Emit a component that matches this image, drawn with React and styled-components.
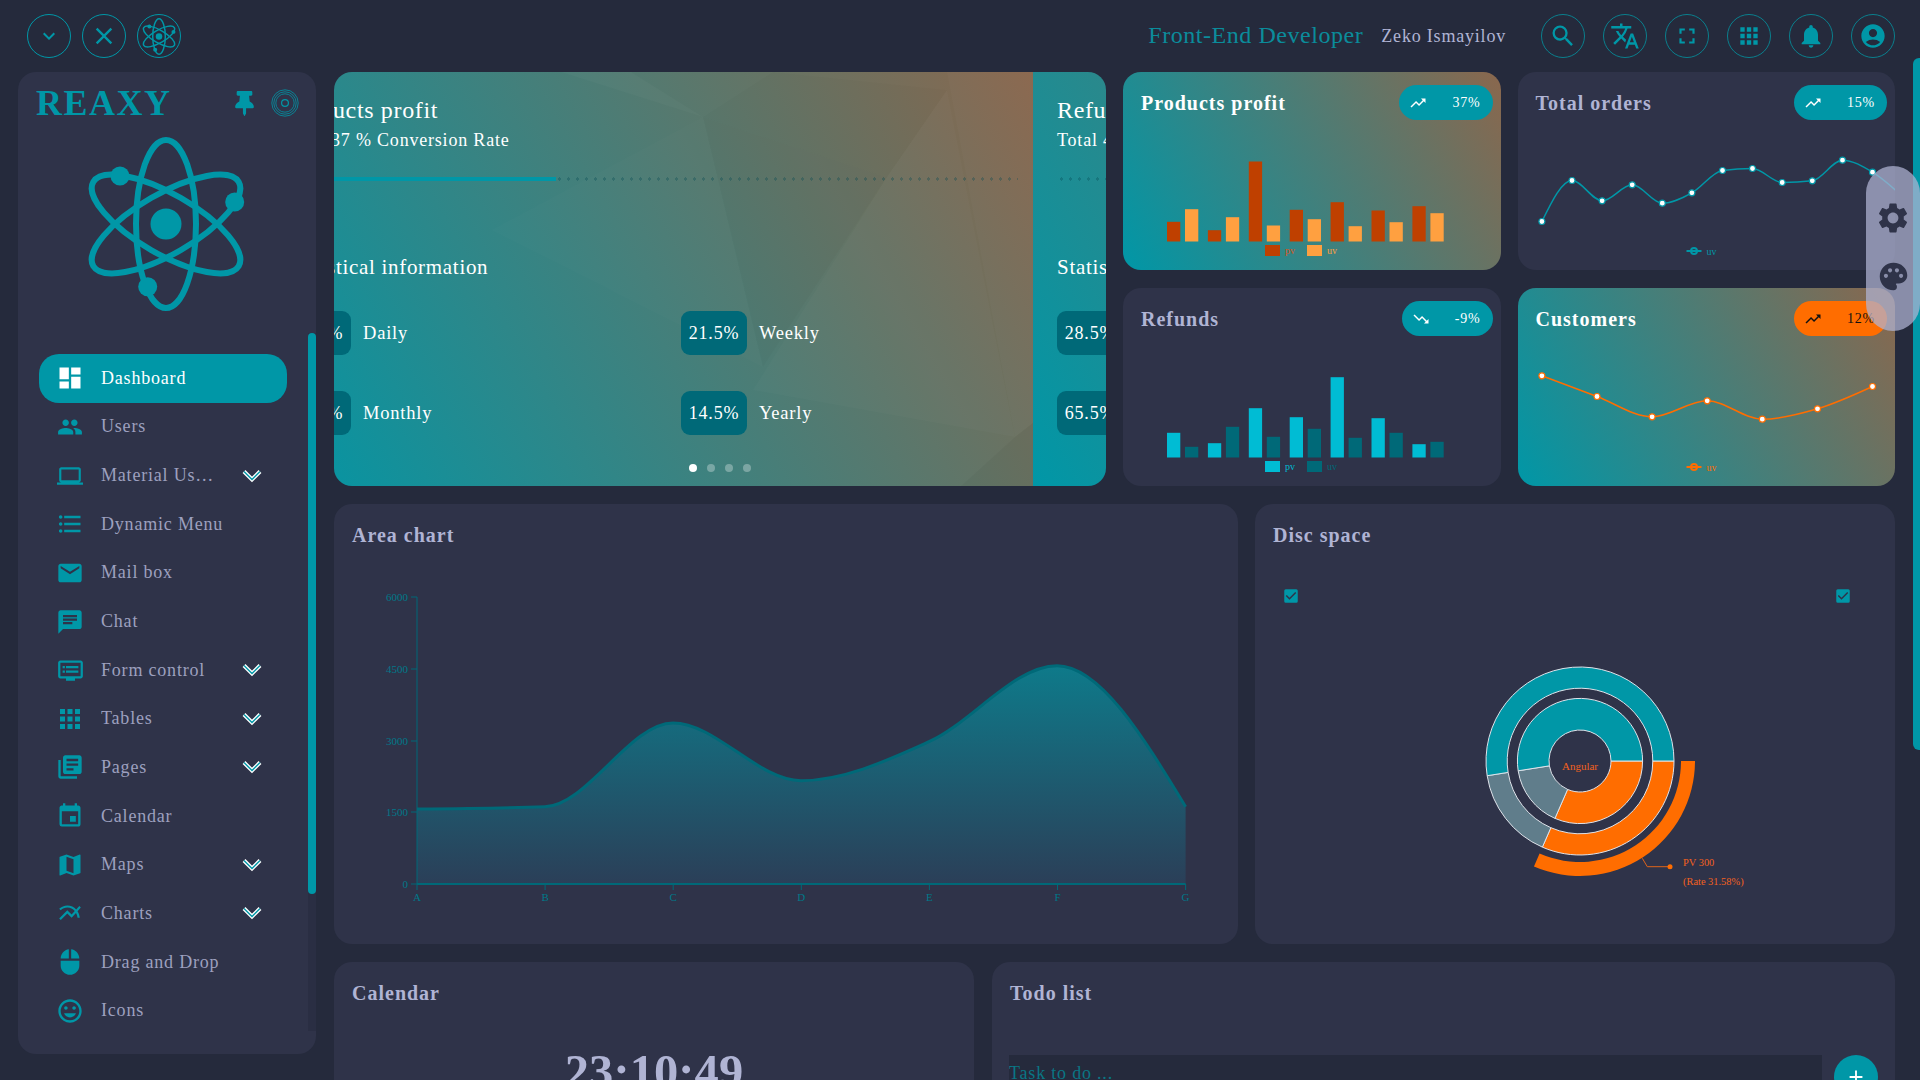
import React from 'react';
import styled, { createGlobalStyle } from 'styled-components';
import { FaThumbtack } from 'react-icons/fa';
import {
  MdKeyboardArrowDown, MdClose, MdSearch, MdTranslate, MdFullscreen, MdApps, MdNotifications,
  MdAccountCircle, MdDashboard, MdPeople, MdLaptop, MdFormatListBulleted, MdEmail, MdChat, MdDvr, MdLibraryBooks,
  MdEvent, MdMap, MdMultilineChart, MdMouse, MdInsertEmoticon, MdTrendingUp, MdTrendingDown,
  MdSettings, MdPalette, MdCheckBox, MdAdd,
} from 'react-icons/md';

const teal = '#0097a7';
const tealDark = '#006978';
const bg = '#252a3c';
const panel = '#2f3349';
const soft = '#b0b4d4';
const orange = '#ff6d00';
const cardGradient = 'linear-gradient(60deg, #0097a7, #8a674d)';

const GlobalStyle = createGlobalStyle`
  html, body {
    margin: 0;
    height: 100%;
    background: ${bg};
    overflow: hidden;
    font-family: "Liberation Serif", "Times New Roman", serif;
  }
  * { box-sizing: border-box; }
`;

const Page = styled.div`
  position: relative;
  height: 1080px;
  overflow: hidden;
  background: ${bg};
  letter-spacing: .8px;
`;

const Header = styled.header`
  display: flex;
  align-items: center;
  height: 72px;
  padding: 0 25px 0 27px;
`;

const HeaderGroup = styled.div`
  display: flex;
  align-items: center;
  gap: ${props => props.$gap}px;
`;

const RoundButton = styled.button`
  display: flex;
  align-items: center;
  justify-content: center;
  width: 44px;
  height: 44px;
  padding: 0;
  border: 1px solid ${props => props.$dim ? '#0a7f8d' : teal};
  border-radius: 50%;
  background: transparent;
  color: ${teal};
`;

const Role = styled.span`
  margin: 0 0 2px auto;
  font-size: 24px;
  letter-spacing: .55px;
  color: #0b8c9b;
`;

const UserName = styled.span`
  margin: 0 35px 0 18px;
  font-size: 18px;
  color: ${soft};
`;

const Body = styled.div`
  display: flex;
  gap: 18px;
  height: 1008px;
  padding: 0 25px 0 18px;
`;

const Sidebar = styled.aside`
  display: flex;
  flex-direction: column;
  flex: 0 0 298px;
  height: 982px;
  padding-bottom: 23px;
  border-radius: 18px;
  background: ${panel};
`;

const SideHead = styled.div`
  display: flex;
  align-items: center;
  height: 62px;
  padding: 0 17px 0 18px;
  color: ${teal};
`;

const Logo = styled.div`
  flex: 1;
  font-size: 36px;
  font-weight: bold;
  letter-spacing: 1.5px;
  color: ${teal};
`;

const PinIcon = styled(FaThumbtack)`
  margin-right: 14px;
`;

const BigAtom = styled.div`
  display: flex;
  justify-content: center;
  height: 176px;
  margin: 2px 2px 21px 0;
`;

const MenuArea = styled.div`
  display: flex;
  flex: 1;
  min-height: 0;
`;

const NavList = styled.nav`
  flex: 1;
  padding: 21px 21px 0;
  overflow: hidden;
`;

const NavItem = styled.div`
  display: flex;
  align-items: center;
  gap: 17px;
  height: 48.65px;
  padding: 0 25px 0 17px;
  border-radius: 20px;
  font-size: 18px;
  color: ${props => props.$active ? '#fff' : '#9da0bf'};
  background: ${props => props.$active ? teal : 'transparent'};
`;

const NavIcon = styled.span`
  display: flex;
  flex: 0 0 28px;
  min-width: 0;
  justify-content: center;
  color: ${props => props.$active ? '#fff' : teal};

  svg {
    flex: none;
  }
`;

const NavLabel = styled.span`
  max-width: ${props => props.$short ? '114px' : 'none'};
  white-space: nowrap;
  overflow: hidden;
  text-overflow: ellipsis;
`;

const NavChevron = styled.svg`
  flex: none;
  margin-left: auto;
`;

const ScrollTrack = styled.div`
  flex: 0 0 8px;
  background: #2a2e43;
`;

const ScrollThumb = styled.div`
  height: 561px;
  border-radius: 4px;
  background: ${teal};
`;

const Main = styled.main`
  display: flex;
  flex: 1;
  flex-direction: column;
  gap: 18px;
  min-width: 0;
`;

const TopRow = styled.div`
  display: grid;
  grid-template-columns: 772px 377.5px 377.5px;
  grid-template-rows: 198px 198px;
  gap: 18px 17px;
`;

const Hero = styled.section`
  position: relative;
  grid-row: 1 / 3;
  border-radius: 18px;
  overflow: hidden;
`;

const HeroTrack = styled.div`
  display: flex;
  width: 1544px;
  height: 100%;
  transform: translateX(-73px);
`;

const Slide = styled.div`
  position: relative;
  flex: 0 0 772px;
  padding: 24px 15px 0 24px;
  color: #fff;
  background: ${cardGradient};
`;

const SlideShapes = styled.svg`
  position: absolute;
  inset: 0;
`;

const SlideContent = styled.div`
  position: relative;
`;

const SlideTitle = styled.div`
  font-size: 24px;
  line-height: 28px;
  letter-spacing: .65px;
`;

const SlideSub = styled.div`
  margin-top: 4px;
  font-size: 18px;
  line-height: 24px;
  letter-spacing: .8px;
`;

const Progress = styled.div`
  height: 4px;
  margin-top: 25px;
  background-image: radial-gradient(circle, rgba(0, 70, 80, .3) 1.5px, transparent 1.6px);
  background-size: 9px 4px;
`;

const ProgressFill = styled.div`
  height: 100%;
  background: ${teal};
`;

const StatHeading = styled.div`
  margin-top: 74px;
  font-size: 21px;
  line-height: 24px;
  letter-spacing: .7px;
`;

const StatGrid = styled.div`
  display: grid;
  grid-template-columns: 396px 1fr;
  gap: 36px 0;
  margin-top: 32px;
`;

const Stat = styled.div`
  display: flex;
  align-items: center;
  gap: 12px;
  font-size: 18.5px;
`;

const StatBadge = styled.div`
  display: flex;
  align-items: center;
  justify-content: center;
  width: 66px;
  height: 44px;
  border-radius: 9px;
  font-size: 18px;
  background: ${tealDark};
`;

const Dots = styled.div`
  position: absolute;
  left: 0;
  right: 0;
  bottom: 14px;
  display: flex;
  justify-content: center;
  gap: 10px;
`;

const Dot = styled.span`
  width: 8px;
  height: 8px;
  border-radius: 50%;
  background: ${props => props.$on ? '#fff' : 'rgba(255, 255, 255, .3)'};
`;

const Card = styled.section`
  border-radius: 18px;
  overflow: hidden;
  background: ${props => props.$gradient ? cardGradient : panel};
`;

const CardHead = styled.div`
  display: flex;
  align-items: center;
  justify-content: space-between;
  height: 62px;
  padding: 13px 8px 14px 18px;
`;

const CardTitle = styled.h3`
  margin: 2px 0 0;
  font-size: 20px;
  font-weight: bold;
  letter-spacing: 1px;
  color: ${props => props.$light ? '#fff' : soft};
`;

const Pill = styled.div`
  display: flex;
  align-items: center;
  gap: 25px;
  height: 35px;
  padding: 0 12px 0 10px;
  border-radius: 18px;
  font-size: 14px;
  color: ${props => props.$alert ? '#111' : '#fff'};
  background: ${props => props.$alert ? orange : teal};
`;

const ChartSvg = styled.svg`
  display: block;
`;

const ChartText = styled.text`
  font-size: ${props => props.$size || 10}px;
  letter-spacing: 0;
`;

const MiddleRow = styled.div`
  display: grid;
  grid-template-columns: 904px 640px;
  grid-template-rows: 440px;
  gap: 17px;
`;

const CheckRow = styled.div`
  display: flex;
  justify-content: space-between;
  height: 18px;
  margin-top: 21px;
  padding: 0 43px 0 27px;
  color: ${teal};
`;

const BottomRow = styled.div`
  display: grid;
  grid-template-columns: 640px 903px;
  grid-template-rows: 300px;
  gap: 18px;
`;

const Clock = styled.div`
  margin-top: 24px;
  text-align: center;
  font-size: 48.5px;
  line-height: 48px;
  font-weight: bold;
  letter-spacing: .1px;
  color: ${soft};
`;

const TodoForm = styled.div`
  display: flex;
  gap: 12px;
  margin-top: 31px;
  padding: 0 17px;
`;

const TodoInput = styled.input`
  flex: 1;
  height: 44px;
  padding: 0 0 7px;
  border: 0;
  outline: 0;
  font-family: inherit;
  font-size: 18px;
  letter-spacing: .8px;
  color: ${soft};
  background: ${bg};

  &::placeholder {
    color: #0a7684;
    opacity: 1;
  }
`;

const AddButton = styled.button`
  display: flex;
  align-items: center;
  justify-content: center;
  width: 44px;
  height: 44px;
  padding: 0;
  border: 0;
  border-radius: 50%;
  color: #fff;
  background: ${teal};
`;

const PageScroll = styled.div`
  position: absolute;
  top: 58px;
  right: 0;
  width: 7px;
  height: 692px;
  border-radius: 6px 0 0 6px;
  background: ${teal};
`;

const FloatPanel = styled.div`
  position: absolute;
  top: 166px;
  right: 0;
  display: flex;
  flex-direction: column;
  align-items: center;
  gap: 24px;
  width: 54px;
  height: 165px;
  padding-top: 34px;
  border-radius: 27px;
  color: ${panel};
  background: rgba(176, 180, 212, .72);
`;

const menu = [
  { label: 'Dashboard', icon: MdDashboard, active: true },
  { label: 'Users', icon: MdPeople, size: 26 },
  { label: 'Material User Interface', icon: MdLaptop, sub: true, size: 26 },
  { label: 'Dynamic Menu', icon: MdFormatListBulleted },
  { label: 'Mail box', icon: MdEmail },
  { label: 'Chat', icon: MdChat },
  { label: 'Form control', icon: MdDvr, sub: true, size: 27 },
  { label: 'Tables', icon: MdApps, sub: true, size: 30 },
  { label: 'Pages', icon: MdLibraryBooks, sub: true },
  { label: 'Calendar', icon: MdEvent },
  { label: 'Maps', icon: MdMap, sub: true },
  { label: 'Charts', icon: MdMultilineChart, sub: true, size: 26 },
  { label: 'Drag and Drop', icon: MdMouse },
  { label: 'Icons', icon: MdInsertEmoticon },
];

// d3 style monotone-x curve, same look as the chart library lines
const monotonePath = (pts) => {
  const n = pts.length;
  const dx = [];
  const m = [];
  for (let i = 0; i < n - 1; i++) {
    dx[i] = pts[i + 1][0] - pts[i][0];
    m[i] = (pts[i + 1][1] - pts[i][1]) / dx[i];
  }
  const t = [m[0]];
  for (let i = 1; i < n - 1; i++) {
    if (m[i - 1] * m[i] <= 0) t[i] = 0;
    else {
      const p = (m[i - 1] * dx[i] + m[i] * dx[i - 1]) / (dx[i - 1] + dx[i]);
      t[i] = (Math.sign(m[i - 1]) + Math.sign(m[i])) * Math.min(Math.abs(m[i - 1]), Math.abs(m[i]), 0.5 * Math.abs(p));
    }
  }
  t[n - 1] = m[n - 2];
  t[0] = (3 * m[0] - t[1]) / 2;
  t[n - 1] = (3 * m[n - 2] - t[n - 2]) / 2;
  let d = `M${pts[0][0]} ${pts[0][1]}`;
  for (let i = 0; i < n - 1; i++) {
    const h = dx[i] / 3;
    d += `C${pts[i][0] + h} ${pts[i][1] + t[i] * h} ${pts[i + 1][0] - h} ${pts[i + 1][1] - t[i + 1] * h} ${pts[i + 1][0]} ${pts[i + 1][1]}`;
  }
  return d;
};

const Atom = ({ height, strokeWidth = 6 }) => (
  <svg height={height} viewBox="-81 -88 162 176" fill="none" stroke={teal} strokeWidth={strokeWidth}>
    <ellipse rx="30" ry="84" />
    <ellipse rx="30" ry="84" transform="rotate(60)" />
    <ellipse rx="30" ry="84" transform="rotate(-60)" />
    <g fill={teal} stroke="none">
      <circle r="15.5" />
      <circle cx="-46" cy="-48" r="9.5" />
      <circle cx="68.7" cy="-22" r="9.5" />
      <circle cx="-18.3" cy="62.7" r="9.5" />
    </g>
  </svg>
);

const RadioRings = () => (
  <svg width="28" height="28" viewBox="0 0 28 28" fill="none" stroke={teal}>
    <circle cx="14" cy="14" r="13.2" strokeWidth=".8" />
    <circle cx="14" cy="14" r="11.2" strokeWidth=".8" />
    <circle cx="14" cy="14" r="9.2" strokeWidth=".8" />
    <circle cx="14" cy="14" r="3.4" strokeWidth="1.2" />
  </svg>
);

const DoubleChevron = () => (
  <NavChevron width="20" height="14" viewBox="0 0 20 14" fill="none">
    <path d="M2 2.5 10 10.5 18 2.5" stroke="#fff" strokeWidth="4" />
    <path d="M2 2.5 10 10.5 18 2.5" stroke={teal} strokeWidth="1.4" />
  </NavChevron>
);

const pvA = [19.7, 11.3, 80, 31.7, 39.3, 31, 35.3];
const uvA = [32.3, 24.3, 16, 22.3, 15.3, 19.3, 28.3];
const pvB = [24.7, 14.3, 49.3, 40.3, 80.3, 39.3, 13.3];
const uvB = [10.7, 30.7, 20.7, 28.7, 19.7, 24.7, 15.7];

const BarChart = ({ pv, uv, pvColor, uvColor, pvText, uvText }) => (
  <ChartSvg width="377" height="136" viewBox="0 0 377 136">
    <g transform="translate(1 0)">
      {pv.map((h, i) => (
        <g key={i}>
          <rect x={43 + i * 40.9} y={107.5 - h} width="13.3" height={h} fill={pvColor} />
          <rect x={61 + i * 40.9} y={107.5 - uv[i]} width="13.3" height={uv[i]} fill={uvColor} />
        </g>
      ))}
      <rect x="141" y="111" width="15" height="11" fill={pvColor} />
      <ChartText x="161" y="120" fill={pvText}>pv</ChartText>
      <rect x="183" y="111" width="15" height="11" fill={uvColor} />
      <ChartText x="203" y="120" fill={uvText}>uv</ChartText>
    </g>
  </ChartSvg>
);

const LineChart = ({ points, color, legend }) => (
  <ChartSvg width="378" height="136" viewBox="0 0 378 136">
    <g transform="translate(1.5 .5)">
      <path d={monotonePath(points)} fill="none" stroke={color} strokeWidth="1.5" />
      {points.map(([x, y], i) => (
        <circle key={i} cx={x} cy={y} r="3" fill="#fff" stroke={color} strokeWidth="1.2" />
      ))}
      <path d="M167 116.5h15" stroke={legend} strokeWidth="2" />
      <circle cx="174.5" cy="116.5" r="3" fill="none" stroke={legend} strokeWidth="2" />
      <ChartText x="187" y="120" fill={legend}>uv</ChartText>
    </g>
  </ChartSvg>
);

const ordersPoints = [[22.4, 87], [52.5, 46], [82.6, 66.3], [112.7, 50.3], [142.8, 68.7], [172.4, 58.3], [203, 36], [233, 34], [262.7, 48], [292.8, 46.3], [323, 25.7], [353, 37.7], [381, 60]];
const customerPoints = [[22.4, 25.3], [77.5, 46], [132.6, 66.3], [187.7, 50.3], [242.8, 68.7], [298, 58.3], [353, 36]];

const areaPoints = [[83, 243], [211, 240.7], [339, 157], [467, 214.7], [595, 175.7], [723, 99.7], [851.6, 240.7]];
const areaLine = monotonePath(areaPoints);
const tickColor = '#00798a';

const AreaChart = () => (
  <ChartSvg width="904" height="378" viewBox="0 0 904 378">
    <defs>
      <linearGradient id="areaFill" x1="0" y1="0" x2="0" y2="1">
        <stop offset="0" stopColor="#0e7a8a" />
        <stop offset="1" stopColor="#2b3f58" />
      </linearGradient>
    </defs>
    <path d={`${areaLine}V318H83Z`} fill="url(#areaFill)" />
    <path d={areaLine} fill="none" stroke={tealDark} strokeWidth="3" />
    <path d="M83 31V318" stroke={tealDark} />
    <path d="M83 318H851.6" stroke={tealDark} strokeWidth="2" />
    {[['6000', 31], ['4500', 103], ['3000', 175], ['1500', 246], ['0', 318]].map(([t, y]) => (
      <g key={t}>
        <path d={`M77 ${y}h6`} stroke={tealDark} />
        <ChartText $size={11} x="74" y={y + 4} textAnchor="end" fill={tickColor}>{t}</ChartText>
      </g>
    ))}
    {['A', 'B', 'C', 'D', 'E', 'F', 'G'].map((t, i) => (
      <g key={t}>
        <path d={`M${83 + i * 128.1} 318v6`} stroke={tealDark} />
        <ChartText $size={11} x={83 + i * 128.1} y="335" textAnchor="middle" fill={tickColor}>{t}</ChartText>
      </g>
    ))}
  </ChartSvg>
);

const arc = (cx, cy, r0, r1, from, to) => {
  const rad = (a) => (a * Math.PI) / 180;
  const pt = (r, a) => `${cx + r * Math.cos(rad(a))} ${cy + r * Math.sin(rad(a))}`;
  const big = to - from > 180 ? 1 : 0;
  return `M${pt(r1, from)}A${r1} ${r1} 0 ${big} 1 ${pt(r1, to)}L${pt(r0, to)}A${r0} ${r0} 0 ${big} 0 ${pt(r0, from)}Z`;
};

const DonutChart = () => {
  const cx = 325;
  const cy = 156;
  const rings = [[31, 62.6], [72.8, 94]];
  const parts = [[0, 113.6, orange], [113.6, 171, '#607d8b'], [171, 360, teal]];
  return (
    <ChartSvg width="640" height="339" viewBox="0 0 640 339">
      {rings.map(([r0, r1]) => parts.map(([a, b, c]) => (
        <path key={`${r0}-${a}`} d={arc(cx, cy, r0, r1, a, b)} fill={c} stroke="#dfe3ea" strokeWidth="1" />
      )))}
      <path d={arc(cx, cy, 101, 115, 0, 113.6)} fill={orange} />
      <path d="M387.3 253.3 392.3 261.7H415" fill="none" stroke="#e0641a" strokeWidth="1" />
      <circle cx="415" cy="261.7" r="2.5" fill={orange} />
      <ChartText $size={11} x="325" y="165" textAnchor="middle" fill="#f4611e">Angular</ChartText>
      <ChartText $size={10.4} x="428" y="261" fill="#f4611e">PV 300</ChartText>
      <ChartText $size={10.4} x="428" y="280" fill="#f4611e">(Rate 31.58%)</ChartText>
    </ChartSvg>
  );
};

const HeroSlide = ({ title, total, percent, stats }) => (
  <Slide>
    <SlideShapes width="772" height="414" viewBox="0 0 772 414">
      <polygon points="300,0 442,45 370,0" fill="rgba(255,255,255,.025)" />
      <polygon points="442,45 512,0 686,18 626,105" fill="rgba(0,0,0,.015)" />
      <polygon points="230,158 442,45 502,295 230,158" fill="rgba(255,255,255,.012)" />
      <polygon points="442,45 626,105 502,295" fill="rgba(0,0,0,.02)" />
      <polygon points="626,105 686,18 754,365 492,318" fill="rgba(255,255,255,.018)" />
      <polygon points="686,0 772,0 772,351 754,365" fill="rgba(255,255,255,.02)" />
      <polygon points="754,365 772,351 772,414 700,414" fill="rgba(0,0,0,.03)" />
    </SlideShapes>
    <SlideContent>
      <SlideTitle>{title}</SlideTitle>
      <SlideSub>Total {total}</SlideSub>
      <Progress>
        <ProgressFill style={{ width: `${percent}%` }} />
      </Progress>
      <StatHeading>Statistical information</StatHeading>
      <StatGrid>
        {stats.map(([value, label]) => (
          <Stat key={label}>
            <StatBadge>{value}</StatBadge>
            {label}
          </Stat>
        ))}
      </StatGrid>
    </SlideContent>
  </Slide>
);

const App = () => (
  <Page>
    <GlobalStyle />
    <Header>
      <HeaderGroup $gap={11}>
        <RoundButton><MdKeyboardArrowDown size={24} /></RoundButton>
        <RoundButton><MdClose size={28} /></RoundButton>
        <RoundButton><Atom height={37} strokeWidth={7} /></RoundButton>
      </HeaderGroup>
      <Role>Front-End Developer</Role>
      <UserName>Zeko Ismayilov</UserName>
      <HeaderGroup $gap={18}>
        <RoundButton $dim><MdSearch size={28} /></RoundButton>
        <RoundButton $dim><MdTranslate size={30} /></RoundButton>
        <RoundButton $dim><MdFullscreen size={26} /></RoundButton>
        <RoundButton $dim><MdApps size={26} /></RoundButton>
        <RoundButton $dim><MdNotifications size={28} /></RoundButton>
        <RoundButton $dim><MdAccountCircle size={28} /></RoundButton>
      </HeaderGroup>
    </Header>
    <Body>
      <Sidebar>
        <SideHead>
          <Logo>REAXY</Logo>
          <PinIcon size={25} />
          <RadioRings />
        </SideHead>
        <BigAtom><Atom height={176} /></BigAtom>
        <MenuArea>
          <NavList>
            {menu.map(({ label, icon: Icon, active, sub, size = 28 }) => (
              <NavItem key={label} $active={active}>
                <NavIcon $active={active}><Icon size={size} /></NavIcon>
                <NavLabel $short={sub}>{label}</NavLabel>
                {sub && <DoubleChevron />}
              </NavItem>
            ))}
          </NavList>
          <ScrollTrack><ScrollThumb /></ScrollTrack>
        </MenuArea>
      </Sidebar>
      <Main>
        <TopRow>
          <Hero>
            <HeroTrack>
              <HeroSlide
                title="Products profit"
                total="37 % Conversion Rate"
                percent={37}
                stats={[['12.5%', 'Daily'], ['21.5%', 'Weekly'], ['51.5%', 'Monthly'], ['14.5%', 'Yearly']]}
              />
              <HeroSlide
                title="Refunds"
                total="49 % Conversion Rate"
                percent={0}
                stats={[['28.5%', 'Daily'], ['11.5%', 'Weekly'], ['65.5%', 'Monthly'], ['24.5%', 'Yearly']]}
              />
            </HeroTrack>
            <Dots>
              <Dot $on /><Dot /><Dot /><Dot />
            </Dots>
          </Hero>
          <Card $gradient>
            <CardHead>
              <CardTitle $light>Products profit</CardTitle>
              <Pill><MdTrendingUp size={18} />37%</Pill>
            </CardHead>
            <BarChart pv={pvA} uv={uvA} pvColor="#bf4000" uvColor="#ffa040" pvText="#d9541a" uvText="#ffa040" />
          </Card>
          <Card>
            <CardHead>
              <CardTitle>Total orders</CardTitle>
              <Pill><MdTrendingUp size={18} />15%</Pill>
            </CardHead>
            <LineChart points={ordersPoints} color={teal} legend={teal} />
          </Card>
          <Card>
            <CardHead>
              <CardTitle>Refunds</CardTitle>
              <Pill><MdTrendingDown size={18} />-9%</Pill>
            </CardHead>
            <BarChart pv={pvB} uv={uvB} pvColor="#00bcd4" uvColor={tealDark} pvText="#00bcd4" uvText={tealDark} />
          </Card>
          <Card $gradient>
            <CardHead>
              <CardTitle $light>Customers</CardTitle>
              <Pill $alert><MdTrendingUp size={18} />12%</Pill>
            </CardHead>
            <LineChart points={customerPoints} color={orange} legend={orange} />
          </Card>
        </TopRow>
        <MiddleRow>
          <Card>
            <CardHead><CardTitle>Area chart</CardTitle></CardHead>
            <AreaChart />
          </Card>
          <Card>
            <CardHead><CardTitle>Disc space</CardTitle></CardHead>
            <CheckRow>
              <MdCheckBox size={18} />
              <MdCheckBox size={18} />
            </CheckRow>
            <DonutChart />
          </Card>
        </MiddleRow>
        <BottomRow>
          <Card>
            <CardHead><CardTitle>Calendar</CardTitle></CardHead>
            <Clock>23:10:49</Clock>
          </Card>
          <Card>
            <CardHead><CardTitle>Todo list</CardTitle></CardHead>
            <TodoForm>
              <TodoInput placeholder="Task to do ..." />
              <AddButton><MdAdd size={22} /></AddButton>
            </TodoForm>
          </Card>
        </BottomRow>
      </Main>
    </Body>
    <PageScroll />
    <FloatPanel>
      <MdSettings size={36} />
      <MdPalette size={33} />
    </FloatPanel>
  </Page>
);

export default App;
